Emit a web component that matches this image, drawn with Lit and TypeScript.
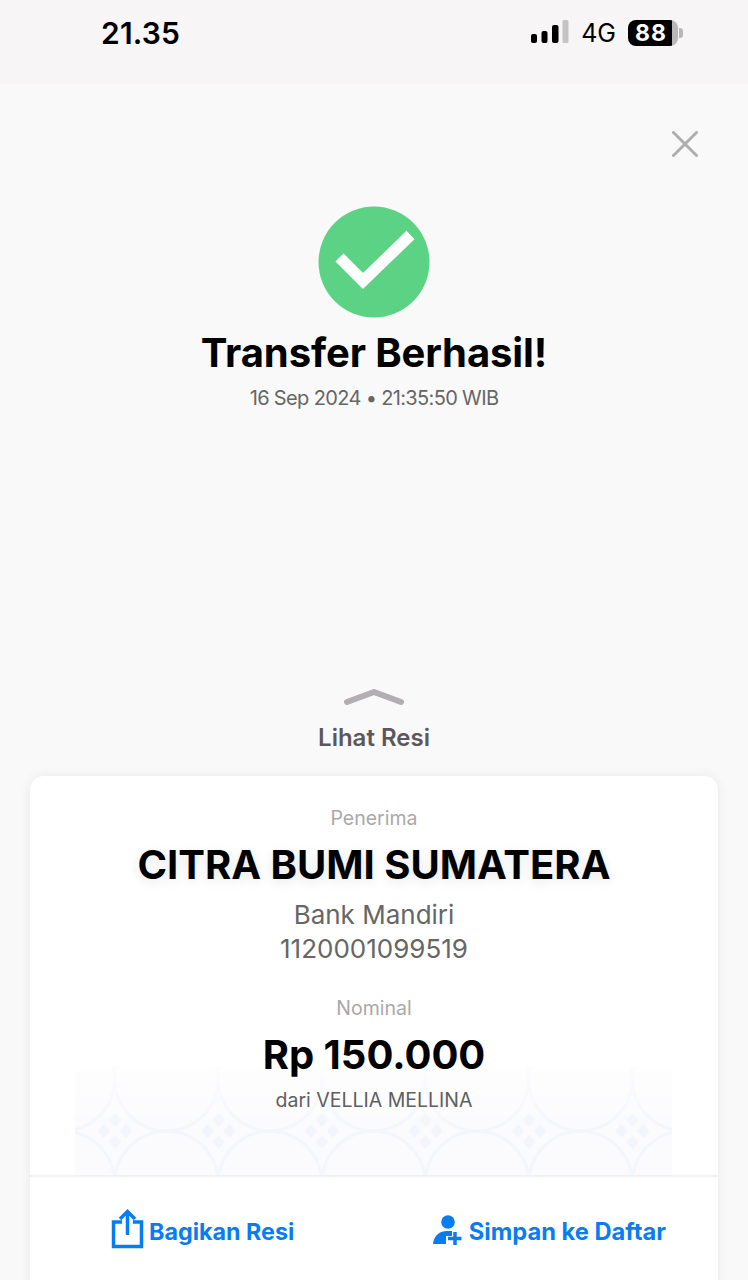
import { LitElement, html, css, svg } from "lit";
import { customElement } from "lit/decorators.js";

@customElement("app-root")
export class AppRoot extends LitElement {
  static styles = css`
    :host { display: block; width: 748px; height: 1280px; overflow: hidden; background: #f9f9f9; font-family: Inter, "Liberation Sans", sans-serif; color: #000; }
    .status { height: 84px; box-sizing: border-box; background: #f7f5f6; display: flex; align-items: flex-start; justify-content: space-between; padding: 15px 65px 0 101px; }
    .time { font-size: 30px; line-height: 36px; font-weight: 600; letter-spacing: 0.2px; }
    .right { display: flex; align-items: center; height: 36px; }
    .net { font-size: 25px; line-height: 36px; font-weight: 400; margin: 0 12px; }
    .battery { width: 50px; height: 26px; border-radius: 8px; background: linear-gradient(90deg, #000 0 88%, #b8b8b8 88%); color: #fff; font-size: 23px; line-height: 26px; font-weight: 700; text-align: center; letter-spacing: 1px; padding-right: 4px; box-sizing: border-box; }
    .nub { width: 4px; height: 10px; background: #b8b8b8; border-radius: 0 3px 3px 0; margin-left: 1px; }
    .closeRow { display: flex; justify-content: flex-end; padding: 47px 50px 0 0; height: 75px; box-sizing: border-box; }
    .hero { display: flex; flex-direction: column; align-items: center; padding-top: 47px; }
    h1 { margin: 10px 0 0; font-size: 40px; line-height: 50px; font-weight: 700; letter-spacing: -0.1px; }
    .date { margin-top: 7px; font-size: 20px; line-height: 26px; color: #666; letter-spacing: -0.65px; }
    .peek { display: flex; flex-direction: column; align-items: center; margin-top: 277px; }
    .peek span { margin-top: 16px; font-size: 24px; line-height: 28px; font-weight: 600; color: #5c5859; }
    .card { position: relative; margin: 24px 30px 0; height: 560px; background: #fff; border-radius: 14px; box-shadow: 0 0 12px rgba(0,0,0,.07); }
    .body { height: 399px; box-sizing: border-box; padding-top: 29px; display: flex; flex-direction: column; align-items: center; position: relative; }
    .body > div { position: relative; }
    .pattern { position: absolute; left: 45px; top: 291px; width: 597px; height: 108px; -webkit-mask-image: linear-gradient(to bottom, rgba(0,0,0,.3), #000 55%); mask-image: linear-gradient(to bottom, rgba(0,0,0,.3), #000 55%); }
    .label { font-size: 19.5px; line-height: 26px; color: #aaa8a9; }
    .name { margin-top: 9px; font-size: 40px; line-height: 50px; font-weight: 700; text-shadow: 0 3px 12px rgba(0,0,0,.1); }
    .bank { margin-top: 8px; font-size: 26px; line-height: 34px; color: #666; text-align: center; }
    .label.nominal { margin-top: 29px; }
    .amount { margin-top: 9px; font-size: 40px; line-height: 50px; font-weight: 700; }
    .from { margin-top: 7px; font-size: 19.5px; line-height: 26px; color: #5f5f5f; }
    .actions { display: flex; justify-content: space-between; box-sizing: border-box; border-top: 2px solid #f1f1f1; height: 160px; padding: 31px 52px 0 81px; }
    .act { display: flex; align-items: center; height: 46px; font-size: 23.7px; font-weight: 700; color: #0a7cf2; }
    .act.first { font-size: 23.3px; }
    .share { margin: 0 5px 5px 0; }
    .person { margin-right: 6px; }
  `;

  pattern() {
    const items = [];
    for (let i = 0; i < 7; i++) {
      const x = -12 + i * 103.5;
      const c = x + 52;
      items.push(svg`<circle cx=${x} cy="12" r="51.75" fill="none" stroke="#f3f6fb" stroke-width="3"/>
        <circle cx=${x} cy="116" r="51.75" fill="none" stroke="#f3f6fb" stroke-width="3"/>
        <path d="M${c} 46 l6 7 l-6 7 l-6 -7Z M${c - 11} 57 l6 7 l-6 7 l-6 -7Z M${c + 11} 57 l6 7 l-6 7 l-6 -7Z M${c} 68 l6 7 l-6 7 l-6 -7Z" fill="#f2f5fb"/>`);
    }
    return html`<svg class="pattern" viewBox="0 0 597 108" aria-hidden="true"><rect width="597" height="108" fill="#fbfbfd"/>${items}</svg>`;
  }

  render() {
    return html`
      <div class="status">
        <div class="time">21.35</div>
        <div class="right">
          <svg width="38" height="26" viewBox="0 0 38 26"><rect x="0" y="14" width="6" height="9" rx="2"/><rect x="10.5" y="11" width="6" height="12" rx="2"/><rect x="21" y="5" width="6.5" height="18" rx="2"/><rect x="31.5" y="0" width="6" height="23" rx="1.5" fill="#c4c4c4"/></svg>
          <span class="net">4G</span>
          <div class="battery">88</div>
          <div class="nub"></div>
        </div>
      </div>
      <div class="closeRow">
        <svg width="26" height="26" viewBox="0 0 26 26"><path d="M1.5 1.5 L24.5 24.5 M24.5 1.5 L1.5 24.5" stroke="#aeaeae" stroke-width="3" stroke-linecap="round"/></svg>
      </div>
      <div class="hero">
        <svg width="112" height="112" viewBox="0 0 112 112"><circle cx="56" cy="56" r="55.5" fill="#5cd285"/><path d="M21.5 51.5 L45 75 L92.5 29" fill="none" stroke="#fff" stroke-width="11.5"/></svg>
        <h1>Transfer Berhasil!</h1>
        <div class="date">16 Sep 2024 • 21:35:50 WIB</div>
      </div>
      <div class="peek">
        <svg width="62" height="20" viewBox="0 0 62 20"><path d="M4 14 L31 4 L58 14" fill="none" stroke="#b2aeb2" stroke-width="6" stroke-linecap="round" stroke-linejoin="round"/></svg>
        <span>Lihat Resi</span>
      </div>
      <div class="card">
        <div class="body">
          ${this.pattern()}
          <div class="label">Penerima</div>
          <div class="name">CITRA BUMI SUMATERA</div>
          <div class="bank">Bank Mandiri<br />1120001099519</div>
          <div class="label nominal">Nominal</div>
          <div class="amount">Rp 150.000</div>
          <div class="from">dari VELLIA MELLINA</div>
        </div>
        <div class="actions">
          <div class="act first">
            <svg class="share" width="33" height="40" viewBox="0 0 33 40"><path d="M11 13 H2.5 V37.5 H30.5 V13 H22 M16.5 26 V3 M9 10 L16.5 2.5 L24 10" fill="none" stroke="#0a7cf2" stroke-width="3.5"/></svg>
            Bagikan Resi
          </div>
          <div class="act">
            <svg class="person" width="30" height="32" viewBox="0 0 30 32"><circle cx="15" cy="7" r="6.8" fill="#0a7cf2"/><path d="M0 29 C1 20 7 16 14 16 H19 V21 H13 V29Z" fill="#0a7cf2"/><path d="M22 17 V30 M15 23.5 H28.5" stroke="#0a7cf2" stroke-width="3.5"/></svg>
            Simpan ke Daftar
          </div>
        </div>
      </div>
    `;
  }
}
